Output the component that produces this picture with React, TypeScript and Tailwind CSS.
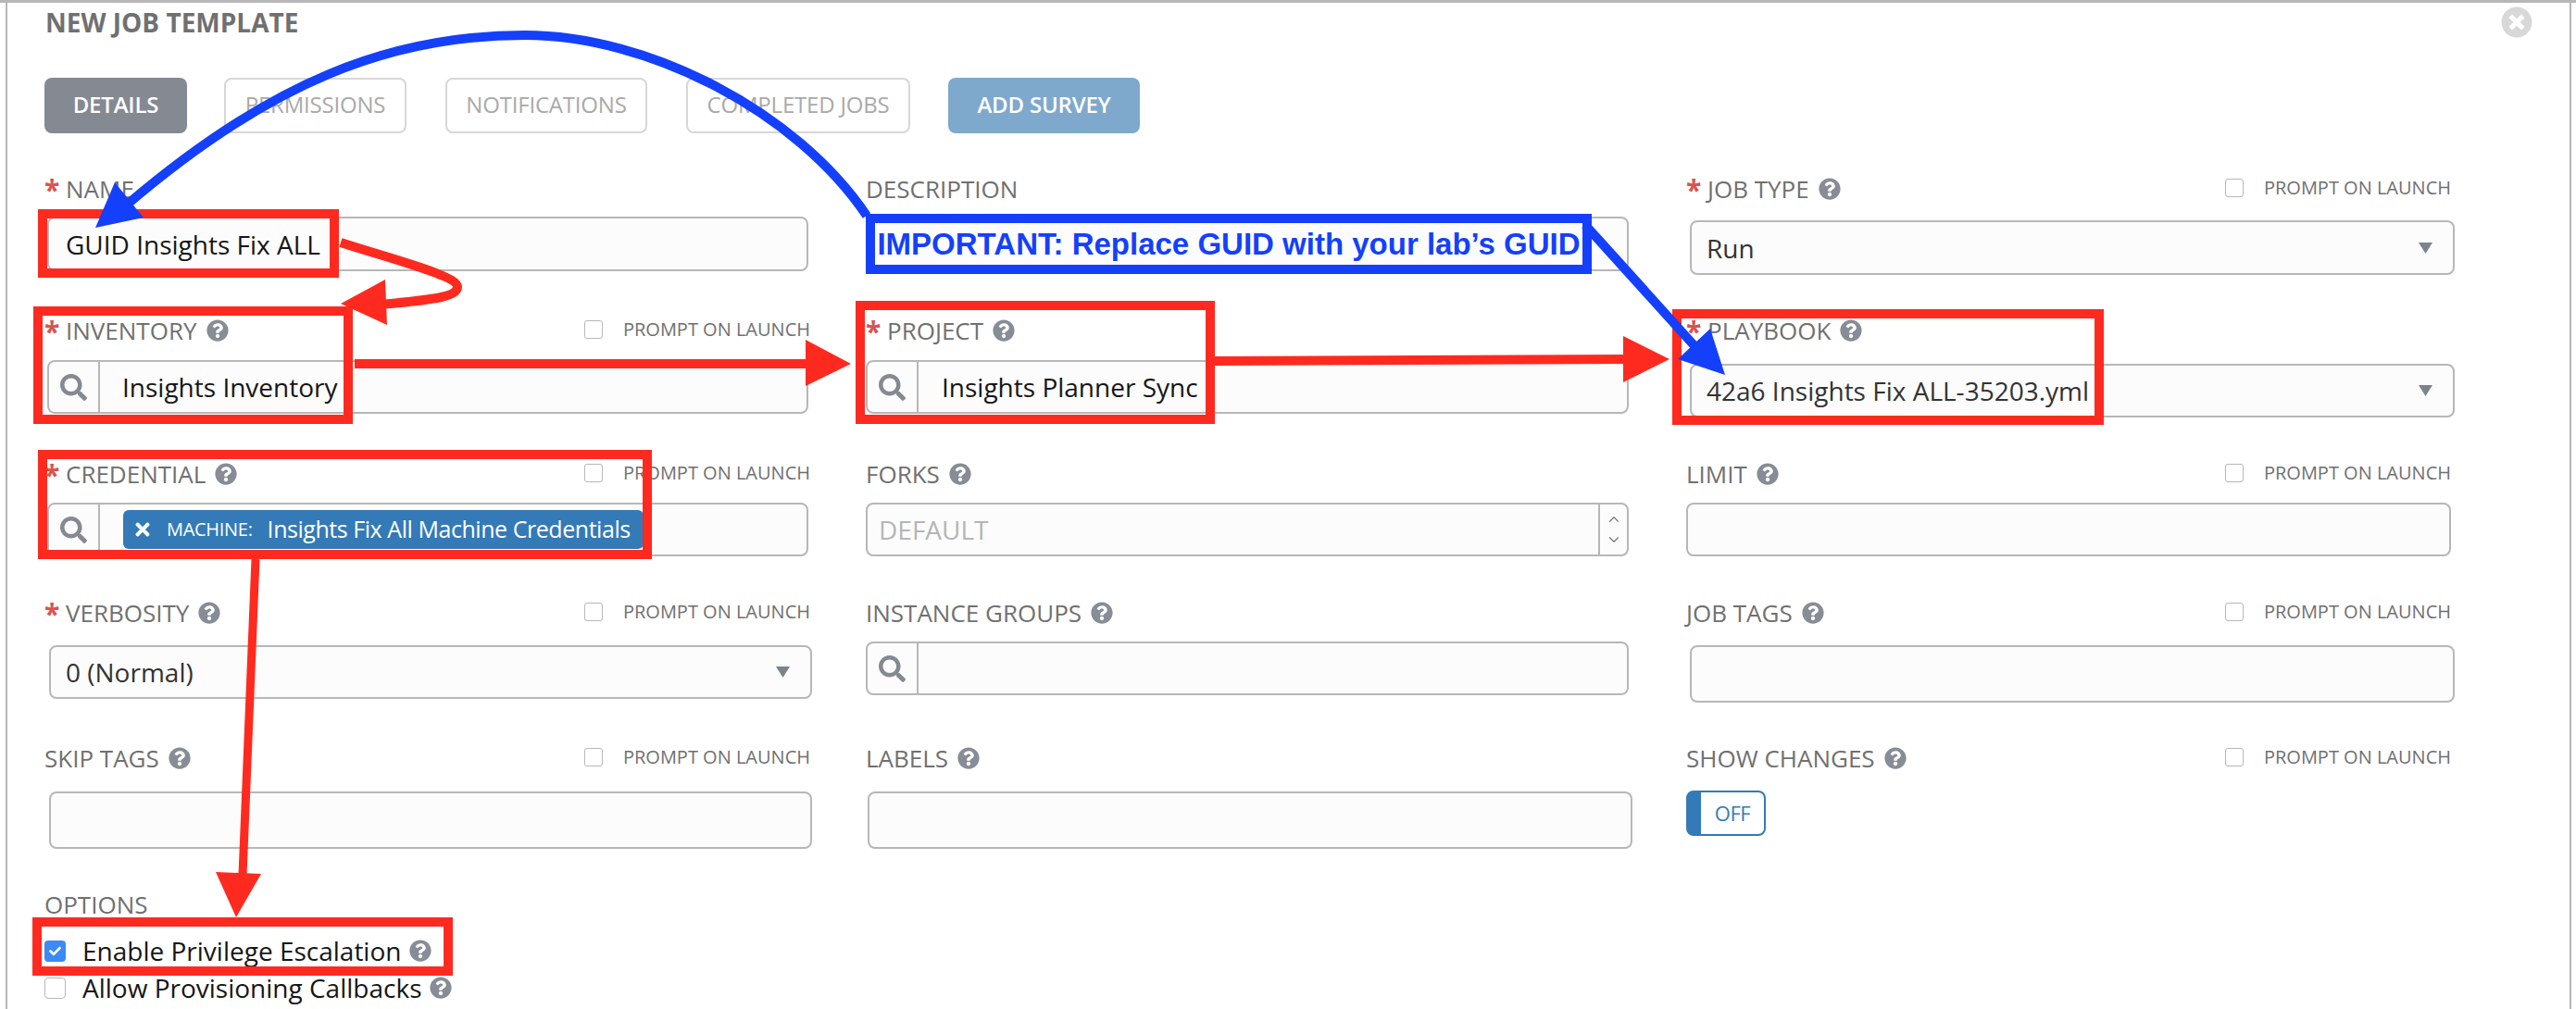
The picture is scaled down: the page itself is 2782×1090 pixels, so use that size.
import React from "react";
import { FaQuestionCircle, FaSearch, FaTimes, FaTimesCircle, FaCheck } from "react-icons/fa";
import { ChevronUp, ChevronDown } from "lucide-react";

function Help() {
  return <FaQuestionCircle className="w-[24px] h-[24px] text-[#878c96] shrink-0" />;
}

function Label({ text, required, prompt, noHelp }: { text: string; required?: boolean; prompt?: boolean; noHelp?: boolean }) {
  return (
    <div className="h-[30px] flex items-center justify-between">
      <div className="flex items-center -mt-[2px]">
        {required && <span className="text-[#d9534f] text-[30px] leading-[30px] font-bold w-[23px] mt-[2px] h-[30px]">*</span>}
        <span className="text-[26px] leading-[30px] text-[#707070]">{text}</span>
        {!noHelp && <span className="ml-[10px]"><Help /></span>}
      </div>
      {prompt && <Prompt />}
    </div>
  );
}

function LabelPlain({ text }: { text: string }) {
  return <div className="h-[30px] flex items-center text-[26px] leading-[30px] text-[#707070] pb-[2px]">{text}</div>;
}

function Prompt() {
  return (
    <div className="flex items-center -mt-[4px]">
      <span className="w-[20px] h-[20px] rounded-[3px] border border-[#b7b7b7] bg-white" />
      <span className="ml-[22px] text-[20px] leading-[24px] text-[#707070] whitespace-nowrap">PROMPT ON LAUNCH</span>
    </div>
  );
}

const box = "border-2 border-[#b7b7b7] rounded-[8px] bg-[#fcfcfc]";

function TextInput({ className, value }: { className: string; value?: string }) {
  return (
    <div className={`${box} flex items-center pl-[18px] text-[28px] text-[#161616] ${className}`}>{value}</div>
  );
}

function Arrow() {
  return (
    <svg viewBox="0 0 15 12" className="w-[15px] h-[12px]">
      <polygon points="0,0 15,0 7.5,12" fill="#7d838d" />
    </svg>
  );
}

function SelectBox({ className, value }: { className: string; value: string }) {
  return (
    <div className={`${box} flex items-center justify-between pl-[16px] pr-[22px] text-[28px] text-[#333333] ${className}`}>
      <span>{value}</span>
      <Arrow />
    </div>
  );
}

function Lookup({ className, children }: { className: string; children?: React.ReactNode }) {
  return (
    <div className={`${box} flex items-stretch ${className}`}>
      <div className="w-[55px] border-r-2 border-[#b7b7b7] flex items-center justify-center shrink-0">
        <FaSearch className="w-[29px] h-[29px] text-[#848992]" />
      </div>
      <div className="flex items-center flex-1 min-w-0 text-[28px] text-[#161616]">{children}</div>
    </div>
  );
}

function Tab({ text, className }: { text: string; className: string }) {
  return (
    <div className={`h-[60px] rounded-[8px] flex items-center justify-center pb-[2px] text-[24px] tracking-[-0.2px] shrink-0 ${className}`}>{text}</div>
  );
}

const grid = "grid grid-cols-[822px_824px_826px] gap-x-[62px]";

function Annotations() {
  const red = "#ff2a1f";
  const blue = "#1440fb";
  return (
    <>
      <div className="absolute left-[945px] top-[241px] w-[764px] h-[45px] bg-[#fcfcfc] flex items-center justify-center font-['Liberation_Sans',sans-serif] font-bold text-[33px] text-[#1440fb] whitespace-nowrap">
        IMPORTANT: Replace GUID with your lab’s GUID
      </div>
      <svg className="absolute left-0 top-0 pointer-events-none" width="2782" height="1090" viewBox="0 0 2782 1090" fill="none">
        <g stroke={red} strokeWidth="10">
          <rect x="46" y="231" width="315" height="64" />
          <rect x="41" y="336" width="335" height="117" />
          <rect x="929" y="330" width="378" height="123" />
          <rect x="1811" y="339" width="456" height="115" />
          <rect x="46" y="491" width="653" height="108" />
          <rect x="40" y="996" width="444" height="53" />
        </g>
        <rect x="940" y="236" width="774" height="55" stroke={blue} strokeWidth="10" />
        <path d="M368 262 C 430 282, 494 298, 494 310 C 494 322, 460 324, 412 329" stroke={red} strokeWidth="10" />
        <polygon points="368,328 416,302 418,351" fill={red} />
        <path d="M383 393 H872" stroke={red} strokeWidth="10" />
        <polygon points="870,367 919,393 870,417" fill={red} />
        <path d="M1312 390 L1755 388" stroke={red} strokeWidth="10" />
        <polygon points="1753,363 1803,388 1753,413" fill={red} />
        <path d="M276 604 L262 945" stroke={red} strokeWidth="9" />
        <polygon points="233,942 282,944 255,991" fill={red} />
        <path d="M936 233 C 860 120, 700 38, 567 38 C 420 38, 290 90, 136 222" stroke={blue} strokeWidth="10" />
        <polygon points="103,246 124,197 155,235" fill={blue} />
        <path d="M1712 243 L1833 377" stroke={blue} strokeWidth="10" />
        <polygon points="1863,405 1847,355 1812,388" fill={blue} />
      </svg>
    </>
  );
}

export default function App() {
  return (
    <div className="relative w-[2782px] h-[1090px] overflow-hidden bg-white font-['Open_Sans',sans-serif]">
      <div className="h-[3px] bg-[#b7b7b7]" />
      <div className="ml-[6px] w-[2771px] h-[1087px] border-x-2 border-[#b7b7b7] pl-[43px] pr-[40px]">
        <div className="h-[42px] flex items-center justify-between -ml-[2px]">
          <span className="text-[28px] font-bold text-[#707070]">NEW JOB TEMPLATE</span>
          <FaTimesCircle className="w-[34px] h-[34px] text-[#d8d8d8]" />
        </div>
        <div className="mt-[39px] -ml-[3px] flex">
          <Tab text="DETAILS" className="w-[154px] bg-[#848992] text-white font-semibold" />
          <Tab text="PERMISSIONS" className="w-[197px] ml-[40px] border-2 border-[#d7d7d7] text-[#a9a9a9]" />
          <Tab text="NOTIFICATIONS" className="w-[218px] ml-[42px] border-2 border-[#d7d7d7] text-[#a9a9a9]" />
          <Tab text="COMPLETED JOBS" className="w-[242px] ml-[42px] border-2 border-[#d7d7d7] text-[#a9a9a9]" />
          <Tab text="ADD SURVEY" className="w-[207px] ml-[41px] bg-[#7ea9cd] text-white font-semibold" />
        </div>

        <div className={`${grid} mt-[46px] h-[153px]`}>
          <div className="-ml-[3px]">
            <Label text="NAME" required noHelp />
            <div className="ml-[3px] mt-[14px]"><TextInput className="h-[59px]" value="GUID Insights Fix ALL" /></div>
          </div>
          <div>
            <LabelPlain text="DESCRIPTION" />
            <TextInput className="mt-[14px] h-[59px]" />
          </div>
          <div>
            <Label text="JOB TYPE" required prompt />
            <SelectBox className="mt-[18px] h-[59px] ml-[4px] -mr-[4px]" value="Run" />
          </div>
        </div>

        <div className={`${grid} h-[155px]`}>
          <div className="-ml-[3px] -mr-[2px]">
            <Label text="INVENTORY" required prompt />
            <div className="ml-[3px] mr-[2px] mt-[16px]"><Lookup className="h-[58px]"><span className="ml-[24px]">Insights Inventory</span></Lookup></div>
          </div>
          <div>
            <Label text="PROJECT" required />
            <Lookup className="mt-[16px] h-[58px]"><span className="ml-[25px]">Insights Planner Sync</span></Lookup>
          </div>
          <div>
            <Label text="PLAYBOOK" required />
            <SelectBox className="mt-[20px] h-[58px] ml-[4px] -mr-[4px]" value="42a6 Insights Fix ALL-35203.yml" />
          </div>
        </div>

        <div className={`${grid} h-[150px]`}>
          <div className="-ml-[3px] -mr-[2px]">
            <Label text="CREDENTIAL" required prompt />
            <div className="ml-[3px] mr-[2px] mt-[15px]">
              <Lookup className="h-[58px]">
                <div className="ml-[25px] h-[42px] w-[562px] rounded-[6px] bg-[#337ab7] text-white flex items-center pl-[10px] whitespace-nowrap">
                  <FaTimes className="w-[22px] h-[22px] shrink-0" />
                  <span className="ml-[15px] text-[20px] tracking-[-0.3px]">MACHINE:</span>
                  <span className="ml-[16px] text-[25px] tracking-[-0.45px]">Insights Fix All Machine Credentials</span>
                </div>
              </Lookup>
            </div>
          </div>
          <div>
            <Label text="FORKS" />
            <div className={`${box} mt-[15px] h-[58px] flex items-stretch justify-between`}>
              <span className="self-center pl-[12px] text-[28px] text-[#b5b5b5]">DEFAULT</span>
              <div className="w-[31px] border-l-2 border-[#b7b7b7] flex flex-col items-center justify-between py-[7px] text-[#777777]">
                <ChevronUp className="w-[20px] h-[18px]" strokeWidth={1.5} />
                <ChevronDown className="w-[20px] h-[18px]" strokeWidth={1.5} />
              </div>
            </div>
          </div>
          <div>
            <Label text="LIMIT" prompt />
            <TextInput className="mt-[15px] h-[58px]" />
          </div>
        </div>

        <div className={`${grid} h-[157px]`}>
          <div className="-ml-[3px] -mr-[2px]">
            <Label text="VERBOSITY" required prompt />
            <div className="ml-[5px] -mr-[2px] mt-[19px]"><SelectBox className="h-[58px]" value="0 (Normal)" /></div>
          </div>
          <div>
            <Label text="INSTANCE GROUPS" />
            <Lookup className="mt-[15px] h-[58px]" />
          </div>
          <div>
            <Label text="JOB TAGS" prompt />
            <TextInput className="mt-[19px] h-[62px] ml-[4px] -mr-[4px]" />
          </div>
        </div>

        <div className={`${grid} h-[112px]`}>
          <div className="-ml-[3px] -mr-[2px]">
            <Label text="SKIP TAGS" prompt />
            <div className="ml-[5px] -mr-[2px] mt-[20px]"><TextInput className="h-[62px]" /></div>
          </div>
          <div>
            <Label text="LABELS" />
            <TextInput className="mt-[20px] h-[62px] ml-[2px] -mr-[4px]" />
          </div>
          <div>
            <Label text="SHOW CHANGES" prompt />
            <div className="mt-[19px] w-[86px] h-[49px] rounded-[8px] border-2 border-[#337ab7] border-l-[16px] bg-white flex items-center justify-center text-[22px] text-[#337ab7] tracking-[-0.4px]">OFF</div>
          </div>
        </div>

        <div className="-ml-[3px] mt-[46px]">
          <LabelPlain text="OPTIONS" />
          <div className="mt-[22px] h-[24px] flex items-center">
            <span className="w-[23px] h-[23px] rounded-[4px] bg-[#3b8bf5] flex items-center justify-center text-white"><FaCheck className="w-[13px] h-[13px]" /></span>
            <span className="ml-[18px] text-[28px] text-[#161616]">Enable Privilege Escalation</span>
            <span className="ml-[9px]"><Help /></span>
          </div>
          <div className="mt-[16px] h-[24px] flex items-center">
            <span className="w-[23px] h-[23px] rounded-[4px] border border-[#b7b7b7] bg-white" />
            <span className="ml-[18px] text-[28px] text-[#161616]">Allow Provisioning Callbacks</span>
            <span className="ml-[9px]"><Help /></span>
          </div>
        </div>
      </div>
      <Annotations />
    </div>
  );
}
